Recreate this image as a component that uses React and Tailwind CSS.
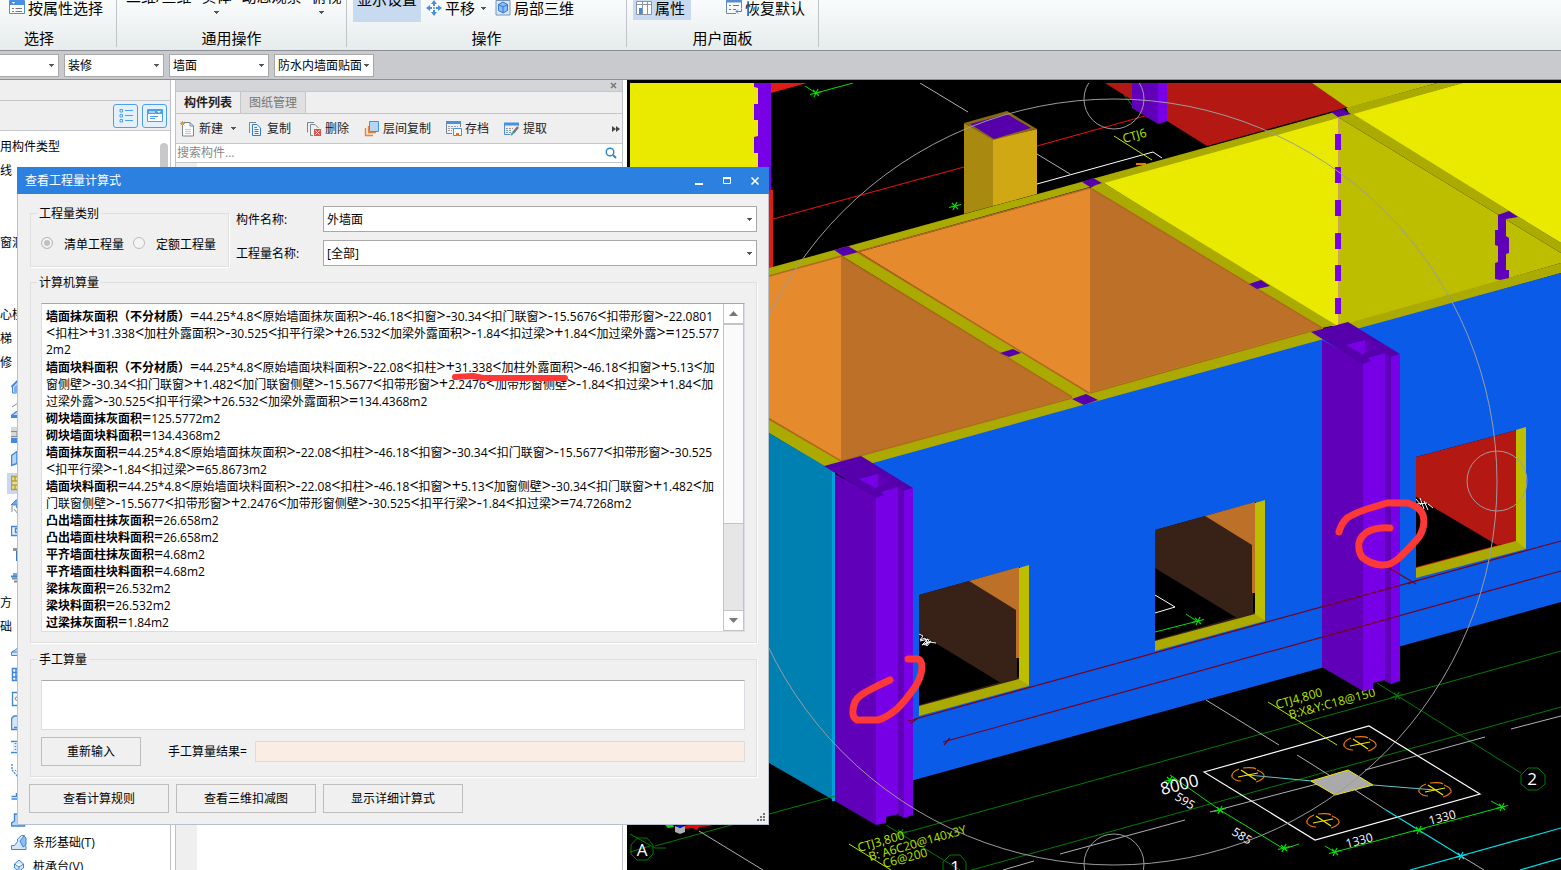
import React from "react";

const SANS = "font-['Open_Sans','Noto_Sans_CJK_SC',sans-serif]";

/* ---------- small shared pieces ---------- */

function Caret({ className = "" }) {
  return (
    <svg viewBox="0 0 5 3" className={"h-[3px] w-[5px] shrink-0 " + className} shapeRendering="crispEdges">
      <path d="M0 0h5v1H4v1H3v1H2V2H1V1H0z" fill="#555" />
    </svg>
  );
}

function Combo({ label, value, className = "" }) {
  return (
    <div className={"relative flex items-center border border-[#a8a8a8] bg-white " + className}>
      <select
        aria-label={label}
        defaultValue={value}
        className="h-full w-full appearance-none bg-transparent pt-[2px] pr-3 pl-[3px] text-[12px] text-black outline-none"
      >
        <option>{value}</option>
      </select>
      <Caret className="pointer-events-none absolute right-1" />
    </div>
  );
}

/* ---------- icons ---------- */

function Icon({ children, className = "h-4 w-4" }) {
  return (
    <svg viewBox="0 0 16 16" fill="none" className={"shrink-0 " + className}>
      {children}
    </svg>
  );
}

const FormIcon = () => (
  <Icon>
    <path d="M.5.5h15v13H.5z" fill="#fff" stroke="#4a90e2" />
    <path d="M1 1h14v4H1z" fill="#4a90e2" />
    <path d="M3 2h3L4.500 4z" fill="#fff" />
    <path d="M3 8.500h2M3 11.500h2M6.500 8.500H13M6.500 11.500H13" stroke="#777" />
  </Icon>
);
const PanIcon = () => (
  <Icon>
    <path d="M8 0l3 4H5zM8 16l3-4H5zM0 8l4-3v6zM16 8l-4-3v6z" fill="#4a90d8" />
    <path d="M8 3v3M8 10v3M3 8h3M10 8h3" stroke="#4a90d8" strokeWidth="2" />
    <circle cx="8" cy="8" r="1" fill="#4a90d8" />
  </Icon>
);
const CubeIcon = () => (
  <Icon>
    <path d="M1 .5h14v14.500H1z" fill="#d8e8fa" stroke="#7a94b8" />
    <path d="M8 2l4.500 2.500v6L8 13l-4.500-2.500v-6z" fill="#8cbcf4" stroke="#2f78d0" />
    <path d="M3.500 4.500L8 7l4.500-2.500M8 7v6" stroke="#2f78d0" />
  </Icon>
);
const PropIcon = () => (
  <Icon>
    <path d="M.5.5h15v13H.5z" fill="#fff" stroke="#8a94a0" />
    <path d="M1 3.500h14M6.500 1v12M11.500 1v12" stroke="#8a94a0" />
    <path d="M3 7h3v6H3z" fill="#3f8ae0" />
  </Icon>
);
const ResetIcon = () => (
  <Icon>
    <path d="M15.500 8V.5H.5v13H10" stroke="#6f8aa8" />
    <path d="M0 1.500h16" stroke="#4a90e2" strokeWidth="2" />
    <path d="M3 5.500h2M3 9.500h2M7 5.500h6M7 9.500h3" stroke="#6c7680" />
    <path d="M15.500 8.500v3H10m2-2l-2 2 2 2" stroke="#3f8ae0" />
  </Icon>
);
const NewIcon = () => (
  <Icon>
    <path d="M3.500 1.500H10l3.500 3.500v10h-11V5" fill="#fafafa" stroke="#7b8790" />
    <path d="M10 1.500V5h3.500" stroke="#7b8790" />
    <path d="M5 8.500h6M5 10.500h6M5 12.500h6" stroke="#c4c8cc" />
    <path d="M2.500 0v5M0 2.500h5M.7.700l3.600 3.600M4.300.7L.7 4.300" stroke="#f0932b" />
  </Icon>
);
const CopyIcon = () => (
  <Icon>
    <path d="M1.500 12V1.500H8" stroke="#7b8790" />
    <path d="M4.500 3.500H9l3.500 3.500v7.500h-8z" fill="#eef5fd" stroke="#2f7cd6" />
    <path d="M6.500 6.500H9M6.500 8.500h4M6.500 10.500h4M6.500 12.500h4" stroke="#2f7cd6" />
  </Icon>
);
const DeleteIcon = () => (
  <Icon>
    <path d="M1.500 11.500v-10H8M7 14.500H4.500v-11H9L12.500 7" stroke="#7b8790" />
    <path d="M8 8h7v7H8z" fill="#d9534f" />
    <path d="M9.500 9.500l4 4M13.500 9.500l-4 4" stroke="#fff" />
  </Icon>
);
const FloorCopyIcon = () => (
  <Icon>
    <path d="M1.500 7v7.500H9M4.500 5v6.500H12" stroke="#f08030" strokeWidth="1.400" />
    <path d="M5.500.5h9v10h-9z" fill="#b4d4fa" stroke="#4a90e2" />
  </Icon>
);
const SaveIcon = () => (
  <Icon>
    <path d="M.5 12.500V.5h14V6M.5 12.500H6" stroke="#7b8790" />
    <path d="M0 1.500h15" stroke="#4a90e2" strokeWidth="3" />
    <path d="M2 5.500h10M2 7.500h5M2 9.500h4" stroke="#9aa4ac" strokeDasharray="2 1" />
    <path d="M7.500 7.500h8v7h-8z" fill="#fff" stroke="#4a90e2" />
    <path d="M10 12h3v3h-3z" fill="#f07020" />
  </Icon>
);
const ExtractIcon = () => (
  <Icon>
    <path d="M.5 13.500V2.500h14V5M.5 13.500H6" stroke="#4a90e2" />
    <path d="M0 3h15" stroke="#4a90e2" strokeWidth="3" />
    <path d="M2 7.500h7M2 9.500h6M2 11.500h5" stroke="#8d979f" strokeDasharray="2 1" />
    <path d="M14 6l-5 6" stroke="#777" strokeWidth="2.500" />
    <path d="M9 12l-2 2" stroke="#20b0c8" strokeWidth="2" />
  </Icon>
);

const blue = "#3f86d8";
const TREE_ICONS = {
  house: (
    <>
      <path d="M.5 8L8 .5 15.500 8" stroke={blue} strokeWidth="2" />
      <path d="M1.500 8v6h4V7l3-2v10h5V7" fill="#cfe2f8" stroke={blue} />
      <path d="M3 8l3-3v9H3z" fill="#7cb0ec" />
    </>
  ),
  arch: (
    <>
      <path d="M1 4l6-4v10" stroke="#7d8c96" />
      <path d="M0 15v-3l5-4h6l4 4v3z" fill="#3f8ae0" />
      <path d="M2 12l4-3h4l3 3z" fill="#b8d8f8" />
    </>
  ),
  slab: (
    <>
      <path d="M0 0h16v11H0z" fill="#d8d8d8" />
      <path d="M0 4.500h16M0 9.500h16M6 4v5" stroke="#8a8a8a" />
      <path d="M0 11h16v5H0z" fill="#3f8ae0" />
    </>
  ),
  curtain: <path d="M.5 4.500L6 .5v12l-5.500 2zM6 .5l5 3v12l-5-3" fill="#b4d4f8" stroke={blue} strokeWidth="1.400" />,
  wall: (
    <>
      <path d="M.5 1.500h14v13H.5z" fill="#e8dfa8" stroke="#b8a030" strokeWidth="1.400" />
      <path d="M0 6h14M0 10h14M4 2v4M8 6v4M4 10v4" stroke="#b8a030" strokeWidth="1.400" />
    </>
  ),
  umbrella: (
    <>
      <path d="M0 6l5-5h6l4 5z" fill="#6ca8ec" stroke={blue} />
      <path d="M5.500 6v3M1 7v6M3 10l4 5" stroke="#7d8c96" />
    </>
  ),
  spiral: <path d="M.5 3.500h14v9H.5zM10 9.500H4.500v-4H8" fill="#e8f2fd" stroke={blue} strokeWidth="1.400" />,
  column: (
    <>
      <path d="M2 1h10v3H2z" fill="#8c969c" />
      <path d="M5 4h4v10H5z" fill="#3f78b8" />
    </>
  ),
  table: (
    <>
      <path d="M2 2h12v3H2z" fill="#6ca8ec" />
      <path d="M0 5.500h16" stroke={blue} strokeWidth="2" />
      <path d="M1 7.500h14M3 10.500h10" stroke="#7d8c96" strokeWidth="2" />
    </>
  ),
  stair: <path d="M.5 12.500V9l4-2 4-4 4 3v6.500zM1 9h7v3" fill="#cfe2f8" stroke={blue} />,
  grid: <path d="M1.500 1.500h13v12h-13zM5 1.500v12M9 1.500v12M1.500 5.500h13M1.500 10h13" stroke={blue} strokeWidth="1.500" />,
  page: (
    <>
      <path d="M1.500 1.500h12v13h-12z" stroke={blue} strokeWidth="1.300" />
      <path d="M8 6Q4 5 4 8q0 2 4 1" stroke="#7d8c96" />
    </>
  ),
  pages: (
    <>
      <path d="M.5 3.500L3 1h9v13.500H.5z" fill="#d4e6fa" stroke={blue} strokeWidth="1.400" />
      <path d="M3 12.500h5V5" stroke={blue} strokeWidth="1.300" />
    </>
  ),
  dashed: (
    <>
      <path d="M0 2.500h16M0 13.500h16" stroke={blue} strokeWidth="1.300" />
      <path d="M2 3h10v10H2z" fill="#dfeefc" />
      <path d="M4.500 4v9" stroke={blue} strokeDasharray="1 2" strokeWidth="1.500" />
    </>
  ),
  check: (
    <>
      <path d="M1 1v6l6 7 8-9" stroke={blue} strokeDasharray="2 1" strokeWidth="1.300" />
      <path d="M4 7l4 4 6-7" stroke="#7d8c96" strokeDasharray="2 1" />
    </>
  ),
  beam: <path d="M.5 9.500h15M.5 12H8M5.500 6v4" stroke={blue} strokeWidth="1.500" />,
  base: <path d="M.5 15v-3l3-2V3h7v7l3 2v3z" fill="#b8d8f8" stroke={blue} strokeWidth="1.400" />,
  strip: (
    <>
      <path d="M.5 14.500v-4h3l3-4V4l4-3.500h3L12 6v3l3 2v3.500z" fill="#d4e6fa" stroke={blue} />
      <path d="M9 6l4-5 2 2v7l-3 2z" fill="#8cbcf0" stroke={blue} />
    </>
  ),
  pile: <path d="M8 1l4.500 4v4L8 12 3.500 9V5zM3.500 5L8 8l4.500-3M8 8v7" fill="#d4e6fa" stroke={blue} />,
};

/* ---------- ribbon ---------- */

function RibbonGroup({ title, width, children }) {
  return (
    <section className={"flex h-[47px] shrink-0 flex-col border-r border-[#c0c4c8] " + width}>
      <div className="h-[25px] w-full shrink-0">{children}</div>
      <h2 className="mr-auto ml-auto shrink-0 text-[15px] leading-[26px]">{title}</h2>
    </section>
  );
}

function RibbonButton({ icon, children, className = "" }) {
  return (
    <button className={"flex h-[30px] items-center gap-1 text-[15px] whitespace-nowrap " + className}>
      {icon}
      {children}
    </button>
  );
}

function Ribbon() {
  return (
    <header className="flex h-[51px] shrink-0 overflow-hidden border-b border-[#8c9096] bg-linear-to-b from-[#fafcfc] to-[#e6ebec]">
      <RibbonGroup title={<span className="mr-[38px]">选择</span>} width="w-[117px]">
        <RibbonButton icon={<FormIcon />} className="-mt-[7px] ml-[9px] gap-[3px]">按属性选择</RibbonButton>
      </RibbonGroup>
      <RibbonGroup title="通用操作" width="w-[230px]">
        <div className="-mt-[19px] flex gap-[10px] pl-[9px]">
          <RibbonButton>二维/三维</RibbonButton>
          <RibbonButton>实体</RibbonButton>
          <RibbonButton>动态观察</RibbonButton>
          <RibbonButton>俯视</RibbonButton>
        </div>
        <div className="flex justify-between pr-[22px] pl-[97px]">
          <Caret />
          <Caret />
        </div>
      </RibbonGroup>
      <RibbonGroup title="操作" width="w-[280px]">
        <div className="flex pl-[6px]">
          <button className="-mt-4 flex h-[38px] w-[68px] justify-center bg-[#c8daf0] pt-1 text-[15px]">显示设置</button>
          <RibbonButton icon={<PanIcon />} className="-mt-[7px] ml-[5px] gap-[3px]">平移</RibbonButton>
          <Caret className="mt-[7px] ml-[6px]" />
          <RibbonButton icon={<CubeIcon />} className="-mt-[7px] ml-[9px] gap-[3px]">局部三维</RibbonButton>
        </div>
      </RibbonGroup>
      <RibbonGroup title="用户面板" width="w-[192px]">
        <div className="flex pl-[6px]">
          <button className="-mt-4 flex h-9 w-[58px] items-center gap-[3px] bg-[#c8daf0] pt-[13px] pl-[3px] text-[15px]">
            <PropIcon />
            属性
          </button>
          <RibbonButton icon={<ResetIcon />} className="-mt-[7px] ml-[35px] gap-[3px]">恢复默认</RibbonButton>
        </div>
      </RibbonGroup>
    </header>
  );
}

function FilterBar() {
  return (
    <nav className="flex h-[29px] shrink-0 items-center gap-[5px] overflow-hidden border-b border-[#8c9096] bg-[#c8cace]">
      <Combo label="楼层" value="" className="-ml-[41px] h-[23px] w-[100px]" />
      <Combo label="类别" value="装修" className="h-[23px] w-[100px]" />
      <Combo label="类型" value="墙面" className="h-[23px] w-[100px]" />
      <Combo label="构件" value="防水内墙面贴面" className="h-[23px] w-[100px]" />
    </nav>
  );
}

/* ---------- left tree ---------- */

const TREE = [
  { tail: "用构件类型" },
  { tail: "线" },
  {},
  {},
  { tail: "窗洞" },
  {},
  {},
  { tail: "心楼" },
  { tail: "梯" },
  { tail: "修" },
  { icon: "house" },
  { icon: "arch" },
  { icon: "slab" },
  { icon: "curtain" },
  { icon: "wall", active: true },
  { icon: "umbrella" },
  { icon: "spiral" },
  { icon: "column" },
  { icon: "table" },
  { tail: "方" },
  { tail: "础" },
  { icon: "stair" },
  { icon: "grid" },
  { icon: "page" },
  { icon: "pages" },
  { icon: "dashed" },
  { icon: "check" },
  { icon: "beam" },
  { icon: "base" },
  { icon: "strip", label: "条形基础(T)" },
  { icon: "pile", label: "桩承台(V)" },
];

function TreePanel() {
  return (
    <aside className="flex w-[171px] shrink-0 flex-col border-r border-[#c0c0c8] bg-white">
      <div className="h-[21px] shrink-0 border-b border-[#c4c6cc] bg-[#efefef]" />
      <div className="flex h-[30px] shrink-0 items-center justify-end gap-1 border-b border-[#c4c6cc] bg-[#efefef] pr-[3px]">
        <button aria-label="列表" className="flex h-6 w-[25px] items-center justify-center rounded-[3px] border border-[#4aa0ee] bg-[#e4f1fd]">
          <Icon>
            <path d="M2 1.500h2.500v2.500H2zM2 6.500h2.500V9H2zM2 11.500h2.500V14H2zM7 2.500h8M7 7.500h8M7 12.500h8" stroke="#4aa0ee" />
          </Icon>
        </button>
        <button aria-label="卡片" className="flex h-6 w-[25px] items-center justify-center rounded-[3px] border border-[#4aa0ee] bg-[#e4f1fd]">
          <Icon>
            <path d="M.5 1.500h15v12H.5z" fill="#fff" stroke="#4aa0ee" />
            <path d="M1 2h14v4H1z" fill="#4aa0ee" />
            <path d="M3 3v2M5 3v2M7 3v2" stroke="#fff" />
            <path d="M10 3h4l-2 2z" fill="#fff" />
            <path d="M3 8.500h8M3 10.500h5" stroke="#4aa0ee" />
          </Icon>
        </button>
      </div>
      <div className="flex min-h-0 flex-1 justify-between overflow-hidden">
        <ul className="flex-1 pt-1 text-[12px] leading-6">
          {TREE.map((row, i) => (
            <li key={i} className="flex h-6 items-center">
              {row.tail && <span>{row.tail}</span>}
              {row.icon && (
                <span className={"ml-[7px] flex h-[21px] items-center pr-1 pl-1 " + (row.active ? "bg-[#c8d8f0]" : "")}>
                  <Icon>{TREE_ICONS[row.icon]}</Icon>
                </span>
              )}
              {row.label && <span className="pl-[2px]">{row.label}</span>}
            </li>
          ))}
        </ul>
        <div className="mt-3 mr-[2px] h-40 w-2 rounded-full bg-[#c8c8c8]" />
      </div>
    </aside>
  );
}

/* ---------- component list panel ---------- */

function ToolButton({ icon, children }) {
  return (
    <button className="flex items-center gap-[3px] text-[12px] whitespace-nowrap text-[#222]">
      {icon}
      {children}
    </button>
  );
}

function ListPanel() {
  return (
    <section className="ml-1 flex w-[448px] shrink-0 flex-col border-r border-l border-[#c0c0c8] bg-white">
      <div className="flex h-3 shrink-0 items-center justify-end border-b border-[#c4c6cc] bg-[#d4d5d9] pr-[5px]">
        <button aria-label="关闭" className="h-[7px] w-[7px]">
          <svg viewBox="0 0 7 7" className="h-[7px] w-[7px]">
            <path d="M1 1l5 5M6 1L1 6" stroke="#777" strokeWidth="1.500" />
          </svg>
        </button>
      </div>
      <div className="flex h-[22px] shrink-0 border-b border-[#c4c6cc] bg-[#efefef] text-[12px]">
        <button className="w-[65px] border-r border-[#c4c6cc] font-bold text-[#222]">构件列表</button>
        <button className="w-[65px] border-r border-[#c4c6cc] bg-[#e0e0e0] text-[#777]">图纸管理</button>
      </div>
      <div className="flex h-[30px] shrink-0 items-center justify-between border-b border-[#c4c6cc] bg-[#efefef] pr-[2px] pl-1">
        <div className="flex items-center gap-[15px]">
          <div className="-mr-[3px] flex items-center gap-2">
            <ToolButton icon={<NewIcon />}>新建</ToolButton>
            <Caret />
          </div>
          <ToolButton icon={<CopyIcon />}>复制</ToolButton>
          <ToolButton icon={<DeleteIcon />}>删除</ToolButton>
          <ToolButton icon={<FloorCopyIcon />}>层间复制</ToolButton>
          <ToolButton icon={<SaveIcon />}>存档</ToolButton>
          <ToolButton icon={<ExtractIcon />}>提取</ToolButton>
        </div>
        <svg viewBox="0 0 8 6" className="h-[6px] w-2">
          <path d="M0 0l4 3-4 3zM4 0l4 3-4 3z" fill="#444" />
        </svg>
      </div>
      <div className="flex h-[19px] shrink-0 items-center border-b border-[#c4c6cc] bg-white pr-[5px]">
        <input
          aria-label="搜索构件"
          placeholder="搜索构件..."
          className="w-full min-w-0 flex-1 px-px text-[12px] outline-none placeholder:text-[#888]"
        />
        <svg viewBox="0 0 12 12" fill="none" className="h-3 w-3">
          <circle cx="5" cy="5" r="3.800" stroke="#2a88c8" strokeWidth="1.400" />
          <path d="M8 8l3 3" stroke="#2a88c8" strokeWidth="2" />
        </svg>
      </div>
      <div className="flex flex-1">
        <div className="w-[21px] bg-[#efefef]" />
      </div>
    </section>
  );
}

/* ---------- 3D viewport ---------- */

const P = ({ p, f }) => <polygon points={p} fill={f} />;
const L = ({ d, c = "#b0b0b0", w = 1 }) => <path d={d} stroke={c} strokeWidth={w} fill="none" />;
const Star = ({ x, y, c = "#00e000" }) => (
  <path
    transform={`translate(${x} ${y})`}
    d="M-6 1.500L6-1.500M-3-3l6 6M-2 4L2-4"
    stroke={c}
    strokeWidth="1.200"
  />
);

const OLIVE = "#aaaa00";
const YEL = "#eaea00";
const DYEL = "#bebe00";
const OR = "#e68a2e";
const DOR = "#bc7028";
const PUR = "#7800e6";
const DPUR = "#6000b8";
const TPUR = "#5500aa";
const RED = "#b41812";

function Column({ x, y, h }) {
  return (
    <g transform={`translate(${x} ${y})`}>
      <polygon points={`0,0 41,22 41,${h} 0,${h - 24}`} fill={DPUR} />
      <polygon points={`41,22 50,14 63,10 63,${h - 11} 51,${h - 8} 51,${h - 2} 41,${h}`} fill={PUR} />
      <polygon points={`63,10 69,12 69,${h - 7} 63,${h - 10}`} fill={DPUR} />
      <polygon points={`69,17 78,14 78,${h - 10} 69,${h - 7}`} fill={PUR} />
      <P p="-11,-8 26,-18 78,14 69,17 63,13 46,18 49,21 41,24" f={TPUR} />
      <P p="24,5 43,0 56,8 40,14" f={DPUR} />
      <P p="24,5 43,0 43,13 40,14" f={PUR} />
    </g>
  );
}

function WindowOpening({ x, y }) {
  return (
    <g transform={`translate(${x} ${y})`}>
      <P p="0,30 101,2 101,115 0,142" f="#000" />
      <P p="0,30 50,16 98,45 98,115 82,118 0,68" f="#382218" />
      <P p="50,16 100,2 100,93 97,93 97,45" f={DOR} />
      <P p="0,140 82,117 100,112 100,115 0,143" f="#382218" />
      <P p="100,3 110,0 110,121 100,115" f={DYEL} />
      <P p="0,141 100,114 110,121 0,151" f={OLIVE} />
    </g>
  );
}

function Pile({ x, y }) {
  return (
    <g transform={`translate(${x} ${y})`} fill="none">
      <path d="M-9-6Q-17-3-16 2Q-13 6-7 6M-5-7Q5-8 8-6M9-5Q17-2 16 2Q14 5 8 7" stroke="#f07808" strokeWidth="1.200" />
      <path d="M-10 2L10-2M-7-5L8 5" stroke="#f0e800" strokeWidth="1.200" />
    </g>
  );
}

function Viewport() {
  const dashes = [134, 167, 200, 233, 265, 298];
  return (
    <main className="ml-1 min-w-0 flex-1 overflow-hidden bg-black">
      <svg
        viewBox="627 80 934 790"
        preserveAspectRatio="xMinYMin slice"
        className="h-full w-full font-['Open_Sans',sans-serif]"
        role="img"
        aria-label="三维模型"
      >
        <rect x="627" y="80" width="934" height="790" fill="#000" />

        {/* far objects */}
        <rect x="630" y="83" width="128" height="120" fill={YEL} />
        <P p="754,83 771,83 771,200 758,200 758,153 754,153 754,137 758,136 758,120 754,120 754,104 758,104 758,88 754,87" f={PUR} />
        <rect x="769" y="190" width="4" height="78" fill="#e01c14" />
        <P p="771,83 807,83 771,93" f="#e01c14" />
        <L d="M805 86L816 93L853 83" c="#00e000" />
        <Star x={816} y={93} />
        <L d="M920 83L968 112M1037 154L1070 174" />
        <L d="M773 219L964 167M1037 146L1145 116" c="#e01010" w={1.2} />
        <L d="M1037 184L1153 152L1162 158" c="#fff" />
        <L d="M1114 136L1152 160" c="#b8e600" />
        <text transform="translate(1124 143) rotate(-16)" fill="#b8e600" fontSize="12">CTJ6</text>
        <L d="M1136 164h10" c="#f07808" w={2} />
        <Star x={955} y={206} />
        <L d="M1124 95l8 10" c="#008000" />
        <P p="1105,83 1132,83 1132,100" f={RED} />
        <P p="1132,83 1158,83 1158,124 1132,108" f={DPUR} />
        <P p="1158,83 1167,83 1167,121 1158,124" f={PUR} />
        <P p="1167,83 1312,83 1348,107 1207,146 1167,121" f={RED} />
        <P p="1312,83 1437,83 1348,108" f={DYEL} />
        <P p="964,123 993,139 993,206 964,214" f="#a88a10" />
        <P p="993,139 1037,129 1037,194 993,206" f="#d0a814" />
        <P p="964,123 1007,111 1037,129 993,140" f="#8a6a10" />
        <P p="970,124 1007,114 1031,128 994,139" f={TPUR} />

        {/* yellow rooms */}
        <P p="1350,114 1462,83 1561,83 1561,243" f={YEL} />
        <P p="1346,108 1437,83 1463,83 1350,115" f={OLIVE} />
        <P p="1102,182 1338,117 1338,326 1332,326" f={YEL} />
        <P p="1338,117 1561,253 1561,263 1352,324 1338,326" f={DYEL} />
        <P p="1338,117 1350,112 1561,243 1561,253" f={OLIVE} />
        <P p="1345,324 1561,263 1561,273 1355,331" f={OLIVE} />
        <L d="M1338.500 118V326" c="#d0a060" />
        {dashes.map((y) => (
          <rect key={y} x="1335" y={y} width="6" height="16" fill={PUR} />
        ))}
        <P p="1498,215 1506,213 1506,236 1509,238 1509,253 1506,254 1506,270 1509,270 1509,278 1500,280 1495,279 1495,263 1498,262 1498,246 1495,245 1495,230 1498,230" f={DPUR} />

        {/* orange rooms */}
        <P p="769,276 841,256 841,461 769,418" f={OR} />
        <P p="841,256 1074,398 841,461" f={DOR} />
        <P p="859,252 1090,188 1090,394" f={OR} />
        <P p="1090,188 1322,328 1090,393" f={DOR} />
        <P p="769,268 1335,112 1345,115 1338,118 769,276" f={OLIVE} />
        <P p="842,256 855,250 1090,394 1074,398" f={OLIVE} />
        <P p="1090,188 1102,182 1336,325 1322,328" f={OLIVE} />
        <P p="769,418 841,461 1072,397 1322,327 1330,338 873,464 825,467 769,433" f={OLIVE} />
        <L d="M769 276L1090 188M857 252L1089 393M842 257L1072 397M769 419L841 461L1072 398M1090 393L1322 328M1092 189L1322 328" c="#b06a20" w={1.5} />
        <P p="834,250 848,246 858,252 843,256" f={TPUR} />
        <P p="1000,353 1013,349 1021,353 1009,357" f={TPUR} />
        <P p="1072,399 1086,394 1098,400 1084,405" f={TPUR} />
        <P p="1082,182 1093,178 1102,183 1090,187" f={TPUR} />
        <P p="1331,112 1343,109 1351,114 1338,117" f={TPUR} />
        <P p="1249,284 1261,280 1270,286 1257,289" f={TPUR} />
        <P p="1498,215 1509,211 1518,217 1506,219" f={TPUR} />

        {/* outer walls */}
        <P p="873,463 1072,408 1324,339 1360,328 1561,273 1561,602 914,780 860,795 860,463" f="#0a5ce8" />
        <P p="769,433 835,472 835,801 769,763" f="#0080b0" />
        <rect x="832" y="472" width="3" height="329" fill="#00a0dc" />
        <WindowOpening x={919} y={565} />
        <WindowOpening x={1155} y={500} />
        <g>
          <P p="1416,457 1517,430 1517,544 1416,570" f="#000" />
          <P p="1416,457 1517,430 1517,542 1497,545 1416,497" f={RED} />
          <P p="1416,567 1517,540 1517,544 1416,571" f={RED} />
          <P p="1516,430 1526,427 1526,549 1516,542" f={DYEL} />
          <P p="1416,568 1516,541 1526,549 1416,578" f={OLIVE} />
        </g>
        <path d="M919 634l4 2-3 4 5-2 2 5M920 641l8-2-6 6 9-4-4 5M924 645l6-3 6 1M929 639l-3 7" stroke="#fff" fill="none" />
        <path d="M1416 499l5 6M1420 498l4 11M1424 501l4 9M1428 504l5 4M1417 504l10-1" stroke="#fff" fill="none" />
        <path d="M1155 595l20 12-20 6" stroke="#fff" fill="none" />
        <L d="M1155 632L1198 621M1186 614l12 8" c="#00e000" />
        <Star x={1198} y={621} />

        {/* ground axes */}
        <L d="M769 814L835 796M900 834L1561 651M968 871L1561 707M1377 683L1521 773M886 825L960 870M655 846L735 824M630 834L655 848H666M630 852L650 846" c="#007c00" />
        <Star x={901} y={833} c="#007c00" />
        <Star x={1397} y={696} c="#007c00" />
        <g fill="#b8e600" fontSize="12">
          <text transform="translate(1277 709) rotate(-16)">CTJ4,800</text>
          <text transform="translate(1290 719) rotate(-15)">B:X&amp;Y:C18@150</text>
          <text transform="translate(859 852) rotate(-16)">CTJ3,800</text>
          <text transform="translate(870 861) rotate(-16)">B: A6C20@140x3Y</text>
          <text transform="translate(884 868) rotate(-15)">C6@200</text>
        </g>
        <Column x={835} y={474} h={351} />
        <Column x={1322} y={340} h={351} />
        <L d="M908 721L1561 541M943 742L1561 571M1389 568L1416 584" c="#780018" w={1.2} />
        <L d="M911 723l7-5M944 745l6-7M1408 584l10-4" c="#780018" w={1.2} />

        {/* pile cap drawing */}
        <L d="M1206 700L1279 745M1297 755L1329 775M1355 790L1386 810M1210 812L1321 783M1365 770L1485 737M1511 729L1561 716M1060 854L1185 820M1003 870L1034 861M699 831L763 870M1461 856L1484 870" />
        <L d="M1204 772L1369 726L1480 794L1315 840Z" c="#fff" w={1.2} />
        <L d="M1248 775L1312 781M1373 785L1435 790" c="#60c8d0" />
        <L d="M1386 810L1461 856M1410 870L1561 828M1520 870L1561 858" c="#00e0e8" w={1.2} />
        <L d="M1170 775L1220 810L1284 849L1299 844M1325 846l10 6L1502 807l-11-6" c="#00e000" />
        <Star x={1170} y={780} />
        <Star x={1220} y={810} />
        <Star x={1284} y={848} />
        <Star x={1335} y={852} />
        <Star x={1419} y={830} />
        <Star x={1502} y={807} />
        <Star x={1461} y={856} c="#00e0e8" />
        <polygon points="1311,781 1348,770 1373,785 1335,795" fill="#aaa" stroke="#f0e800" />
        <Pile x={1248} y={775} />
        <Pile x={1360} y={744} />
        <Pile x={1435} y={790} />
        <Pile x={1323} y={821} />
        <g fill="#fff">
          <text transform="translate(1162 795) rotate(-14)" fontSize="17">8000</text>
          <text transform="translate(1347 848) rotate(-15)" fontSize="12">1330</text>
          <text transform="translate(1430 825) rotate(-15)" fontSize="12">1330</text>
          <text transform="translate(1174 799) rotate(32)" fontSize="12">595</text>
          <text transform="translate(1231 834) rotate(32)" fontSize="12">585</text>
        </g>
        <L d="M1268 702L1337 745M849 844L891 870" c="#b8e600" />
        <g fill="none" stroke="#007c00">
          <path d="M1528 768h10l7 7v9l-7 6h-10l-7-6v-9z" />
          <path d="M950 855h10l6 7v9l-6 6h-10l-7-6v-9z" />
          <path d="M637 838h10l6 7v9l-6 6h-10l-6-6v-9z" />
        </g>
        <g fill="#fff" fontSize="17" textAnchor="middle">
          <text x="1532" y="785">2</text>
          <text x="955" y="873">1</text>
          <text x="642" y="856">A</text>
        </g>
        <path d="M664 824l8-1 2 4-6 1z" fill="#00e000" />
        <path d="M677 822h6v5h-6z" fill="#0010f0" />
        <path d="M684 826l13-4 16 4-14 1-2 3-4-2-9 1z" fill="#f00000" />
        <path d="M675 826l5 2 5-2v6l-5 2-5-2z" fill="#b0b0b0" />

        {/* orbit guide */}
        <g fill="none" stroke="#9c9ca0">
          <circle cx="1114" cy="482" r="383" />
          <circle cx="1114" cy="99" r="30" />
          <circle cx="1497" cy="481" r="30" />
          <circle cx="1114" cy="864" r="30" />
        </g>
        <rect x="627" y="80" width="934" height="3" fill="#000" />

        {/* pen marks */}
        <g fill="none" stroke="#fc3838" strokeWidth="7" strokeLinecap="round" strokeLinejoin="round">
          <path d="M908 659H918Q922 660 922 668Q921 678 915 687Q906 700 897 709Q886 718 878 720H857Q852 717 853 710Q854 700 860 696Q866 691 890 680" />
          <path d="M1339 532Q1341 524 1347 518Q1355 513 1367 509L1387 503H1408Q1420 507 1423 515Q1426 526 1419 537Q1410 548 1399 558Q1390 566 1381 565Q1370 564 1362 557Q1358 551 1359 543Q1361 535 1369 531Q1378 527 1390 528" />
        </g>
      </svg>
    </main>
  );
}

/* ---------- dialog ---------- */

const RESULTS = [
  ["墙面抹灰面积（不分材质）", "=44.25*4.8<原始墙面抹灰面积>-46.18<扣窗>-30.34<扣门联窗>-15.5676<扣带形窗>-22.0801"],
  ["", "<扣柱>+31.338<加柱外露面积>-30.525<扣平行梁>+26.532<加梁外露面积>-1.84<扣过梁>+1.84<加过梁外露>=125.577"],
  ["", "2m2"],
  ["墙面块料面积（不分材质）", "=44.25*4.8<原始墙面块料面积>-22.08<扣柱>+31.338<加柱外露面积>-46.18<扣窗>+5.13<加"],
  ["", "窗侧壁>-30.34<扣门联窗>+1.482<加门联窗侧壁>-15.5677<扣带形窗>+2.2476<加带形窗侧壁>-1.84<扣过梁>+1.84<加"],
  ["", "过梁外露>-30.525<扣平行梁>+26.532<加梁外露面积>=134.4368m2"],
  ["砌块墙面抹灰面积", "=125.5772m2"],
  ["砌块墙面块料面积", "=134.4368m2"],
  ["墙面抹灰面积", "=44.25*4.8<原始墙面抹灰面积>-22.08<扣柱>-46.18<扣窗>-30.34<扣门联窗>-15.5677<扣带形窗>-30.525"],
  ["", "<扣平行梁>-1.84<扣过梁>=65.8673m2"],
  ["墙面块料面积", "=44.25*4.8<原始墙面块料面积>-22.08<扣柱>-46.18<扣窗>+5.13<加窗侧壁>-30.34<扣门联窗>+1.482<加"],
  ["", "门联窗侧壁>-15.5677<扣带形窗>+2.2476<加带形窗侧壁>-30.525<扣平行梁>-1.84<扣过梁>=74.7268m2"],
  ["凸出墙面柱抹灰面积", "=26.658m2"],
  ["凸出墙面柱块料面积", "=26.658m2"],
  ["平齐墙面柱抹灰面积", "=4.68m2"],
  ["平齐墙面柱块料面积", "=4.68m2"],
  ["梁抹灰面积", "=26.532m2"],
  ["梁块料面积", "=26.532m2"],
  ["过梁抹灰面积", "=1.84m2"],
];

function Formula({ text }) {
  return text.split(/([<>=+-]+)/).map((part, i) =>
    i % 2 ? (
      <span key={i} className="text-[16px]">
        {part}
      </span>
    ) : (
      part
    )
  );
}

function Group({ title, className = "", children }) {
  return (
    <fieldset className={"min-w-0 border border-[#dfdfdf] pr-[11px] pl-[10px] shadow-[1px_1px_0_#fff] " + className}>
      <legend className="-ml-1 h-[18px] px-[2px] text-[12px] leading-5">{title}</legend>
      {children}
    </fieldset>
  );
}

function Push({ children, className = "" }) {
  return (
    <button className={"h-[29px] border border-[#bdbdbd] bg-[#f0f0f0] text-[12px] " + className}>{children}</button>
  );
}

const RADIO =
  "h-3 w-3 shrink-0 appearance-none rounded-full border border-[#bcbcbc] bg-[#f4f4f4] checked:bg-[#c0c0c0] checked:shadow-[inset_0_0_0_2px_#f4f4f4]";

function Dialog() {
  return (
    <div
      role="dialog"
      aria-label="查看工程量计算式"
      className="absolute top-[167px] left-[17px] flex w-[752px] flex-col border-r border-b border-l border-[#b8c0cc] bg-[#f0f0f0]"
    >
      <div className="-mx-px flex h-[27px] items-center justify-between bg-[#2c80e0] pr-[9px] pl-2 text-white">
        <h1 className="text-[12px]">查看工程量计算式</h1>
        <div className="flex gap-[18px]">
          <button aria-label="最小化" className="h-[10px] w-[10px]">
            <svg viewBox="0 0 10 10" className="h-[10px] w-[10px]"><path d="M1 7h8v2H1z" fill="#fff" /></svg>
          </button>
          <button aria-label="最大化" className="h-[10px] w-[10px]">
            <svg viewBox="0 0 10 10" className="h-[10px] w-[10px]">
              <path d="M1.500 2v5.500h7V2" fill="none" stroke="#fff" />
              <path d="M1 1h8v2H1z" fill="#fff" />
            </svg>
          </button>
          <button aria-label="关闭" className="h-[10px] w-[10px]">
            <svg viewBox="0 0 10 10" className="h-[10px] w-[10px]"><path d="M1.500 1.500l7 7M8.500 1.500l-7 7" stroke="#fff" strokeWidth="1.600" /></svg>
          </button>
        </div>
      </div>

      <div className="flex flex-col pt-[10px] pr-[11px] pb-[11px] pl-3 text-[12px] leading-[18px]">
        <div className="flex">
          <Group title="工程量类别" className="h-[63px] w-[199px] shrink-0">
            <div className="flex items-center pt-[10px] whitespace-nowrap">
              <input type="radio" id="kind-list" name="kind" disabled defaultChecked className={RADIO} />
              <label htmlFor="kind-list" className="mr-[9px] ml-[11px] pt-1">清单工程量</label>
              <input type="radio" id="kind-quota" name="kind" disabled className={RADIO} />
              <label htmlFor="kind-quota" className="ml-[11px] pt-1">定额工程量</label>
            </div>
          </Group>
          <div className="ml-[7px] grid flex-1 grid-cols-[87px_1fr] content-start items-center gap-y-2 pt-[2px]">
            <span className="pt-[2px]">构件名称:</span>
            <Combo label="构件名称" value="外墙面" className="h-[26px]" />
            <span className="pt-[2px]">工程量名称:</span>
            <Combo label="工程量名称" value="[全部]" className="h-[26px]" />
          </div>
        </div>

        <Group title="计算机算量" className="mt-[6px] pb-[10px]">
          <div className="relative mt-3 flex h-[329px] border border-t-[#a8a8a8] border-[#dcdce4] bg-white">
            <div className="min-w-0 flex-1 overflow-hidden pt-[3px] pl-1">
              {RESULTS.map(([name, formula], i) => (
                <p key={i} className="h-[17px] leading-[17px] whitespace-pre">
                  {name && <b>{name}</b>}
                  <Formula text={formula} />
                </p>
              ))}
            </div>
            <div className="flex w-[21px] shrink-0 flex-col border-r border-l border-[#c4c4c4] bg-[#e6e6e6]">
              <button aria-label="向上" className="flex h-[21px] items-center justify-center border-b-2 border-[#c4c4c4] bg-white">
                <svg viewBox="0 0 9 5" className="h-[5px] w-[9px]"><path d="M4.500 0L9 5H0z" fill="#777" /></svg>
              </button>
              <div className="h-[199px] border-b border-[#c4c4c4] bg-[#fafafa]" />
              <button aria-label="向下" className="mt-auto flex h-[21px] items-center justify-center border-y border-[#c4c4c4] bg-white">
                <svg viewBox="0 0 9 5" className="h-[5px] w-[9px]"><path d="M4.500 5L9 0H0z" fill="#777" /></svg>
              </button>
            </div>
            <svg viewBox="0 0 118 10" fill="none" className="absolute top-[69px] left-[409px] h-[10px] w-[118px]">
              <path d="M4 4L22 3L32 5H114" stroke="#fc3838" strokeWidth="6" strokeLinecap="round" strokeLinejoin="round" />
            </svg>
          </div>
        </Group>

        <Group title="手工算量" className="mt-[7px] pb-[10px]">
          <textarea
            aria-label="手工算量"
            className="mt-3 block h-[50px] w-full resize-none border border-t-[#a8a8a8] border-[#dcdce4] bg-white outline-none"
          />
          <div className="mt-[7px] flex items-center">
            <Push className="w-[100px] shrink-0">重新输入</Push>
            <label htmlFor="manual-result" className="w-[114px] shrink-0 pl-[27px] whitespace-nowrap">手工算量结果=</label>
            <input id="manual-result" readOnly className="h-[21px] min-w-0 flex-1 border border-[#dcdcdc] bg-[#faeee4] outline-none" />
          </div>
        </Group>

        <div className="mt-[7px] -ml-px flex gap-[7px]">
          <Push className="w-[140px]">查看计算规则</Push>
          <Push className="w-[140px]">查看三维扣减图</Push>
          <Push className="w-[140px]">显示详细计算式</Push>
        </div>
      </div>
      <svg viewBox="0 0 8 8" className="absolute right-[3px] bottom-[3px] h-2 w-2">
        <path d="M6 0h2v2H6zM3 3h2v2H3zM6 3h2v2H6zM0 6h2v2H0zM3 6h2v2H3zM6 6h2v2H6z" fill="#777" />
      </svg>
    </div>
  );
}

export default function App() {
  return (
    <div className={"relative flex h-screen flex-col overflow-hidden bg-white text-[12px] text-black " + SANS}>
      <Ribbon />
      <FilterBar />
      <div className="flex min-h-0 flex-1">
        <TreePanel />
        <ListPanel />
        <Viewport />
      </div>
      <Dialog />
    </div>
  );
}
